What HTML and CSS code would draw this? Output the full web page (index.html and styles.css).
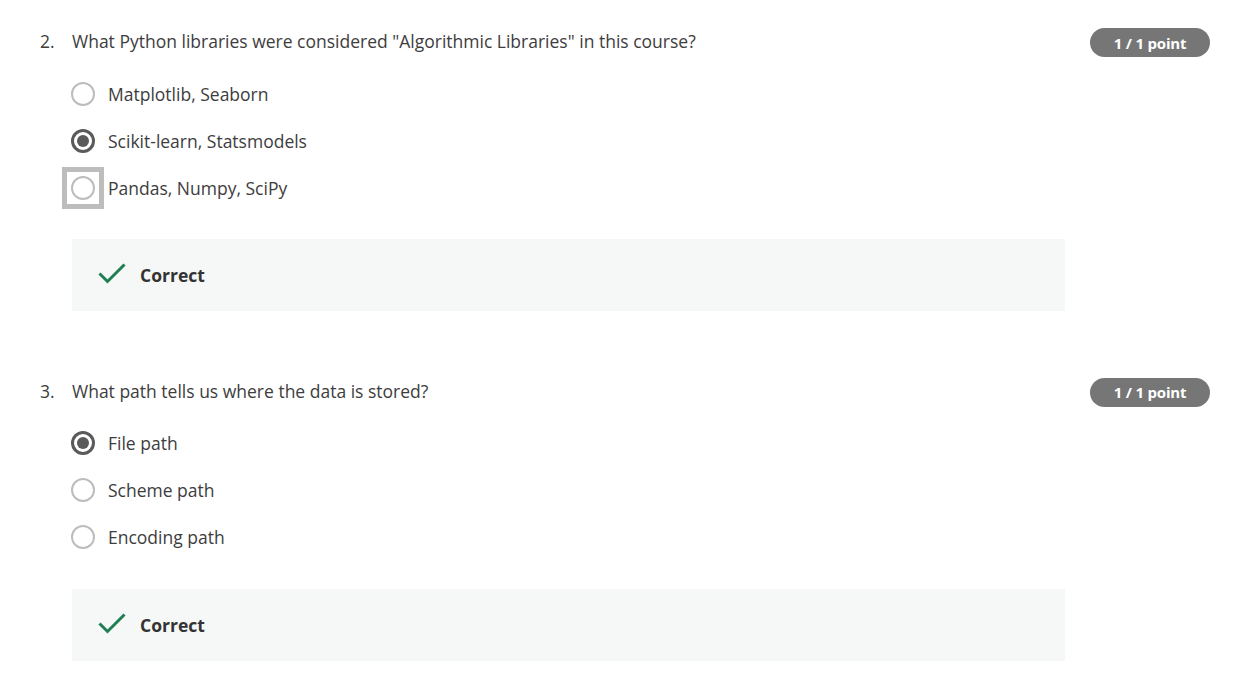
FILE: index.html
```html
<!DOCTYPE html>
<html lang="en">
<head>
<meta charset="utf-8">
<title>Quiz</title>
<link rel="stylesheet" href="styles.css">
</head>
<body>
<div class="page">
  <section class="question">
    <div class="q-head">
      <span class="q-num">2.</span>
      <span class="q-text">What Python libraries were considered "Algorithmic Libraries" in this course?</span>
      <span class="badge">1 / 1 point</span>
    </div>
    <div class="options">
      <div class="option"><span class="radio-wrap"><span class="radio"></span></span><span class="label">Matplotlib, Seaborn</span></div>
      <div class="option"><span class="radio-wrap"><span class="radio checked"></span></span><span class="label">Scikit-learn, Statsmodels</span></div>
      <div class="option"><span class="radio-wrap focused"><span class="radio"></span></span><span class="label">Pandas, Numpy, SciPy</span></div>
    </div>
    <div class="feedback">
      <svg class="check" width="28" height="22" viewBox="0 0 28 22"><path d="M1.5 10.5 L9.5 18.5 L26.5 1.5" fill="none" stroke="#1f7f52" stroke-width="3"/></svg>
      <span class="fb-text">Correct</span>
    </div>
  </section>
  <section class="question">
    <div class="q-head">
      <span class="q-num">3.</span>
      <span class="q-text">What path tells us where the data is stored?</span>
      <span class="badge">1 / 1 point</span>
    </div>
    <div class="options">
      <div class="option"><span class="radio-wrap"><span class="radio checked"></span></span><span class="label">File path</span></div>
      <div class="option"><span class="radio-wrap"><span class="radio"></span></span><span class="label">Scheme path</span></div>
      <div class="option"><span class="radio-wrap"><span class="radio"></span></span><span class="label">Encoding path</span></div>
    </div>
    <div class="feedback">
      <svg class="check" width="28" height="22" viewBox="0 0 28 22"><path d="M1.5 10.5 L9.5 18.5 L26.5 1.5" fill="none" stroke="#1f7f52" stroke-width="3"/></svg>
      <span class="fb-text">Correct</span>
    </div>
  </section>
</div>
</body>
</html>
```
FILE: styles.css
```css
* { box-sizing: border-box; }
body {
  margin: 0;
  background: #fff;
  font-family: "Open Sans", "Noto Sans", sans-serif;
  color: #3d3d3d;
}
.page {
  padding: 28px 30px 0 40px;
  display: flex;
  flex-direction: column;
  gap: 67px;
}
.q-head {
  display: flex;
  align-items: flex-start;
}
.q-num {
  width: 32px;
  font-size: 17.5px;
  line-height: 26px;
}
.q-text {
  font-size: 17.5px;
  line-height: 26px;
}
.badge {
  margin-left: auto;
  width: 120px;
  height: 29px;
  border-radius: 15px;
  background: #767676;
  color: #fff;
  font-weight: 700;
  font-size: 15px;
  display: flex;
  align-items: center;
  justify-content: center;
  letter-spacing: -0.2px;
}
.options {
  margin-top: 13px;
  padding-left: 31px;
  display: flex;
  flex-direction: column;
}
.option {
  height: 47px;
  display: flex;
  align-items: center;
  gap: 13px;
}
.radio-wrap {
  display: flex;
  flex: none;
}
.radio-wrap.focused {
  outline: 5px solid #bdbdbd;
  outline-offset: 4px;
}
.radio {
  width: 24px;
  height: 24px;
  border-radius: 50%;
  border: 2px solid #bdbdbd;
  display: flex;
  align-items: center;
  justify-content: center;
  flex: none;
}
.radio.checked {
  border: 3px solid #5a5a5a;
}
.radio.checked::after {
  content: "";
  width: 12px;
  height: 12px;
  border-radius: 50%;
  background: #5a5a5a;
}
.label {
  font-size: 17.5px;
  line-height: 26px;
}
.feedback {
  margin-top: 27.6px;
  margin-left: 32px;
  width: 993px;
  height: 72.4px;
  background: #f5f8f7;
  display: flex;
  align-items: center;
  padding-left: 26px;
  gap: 14px;
}
.check { display: block; margin-top: -2px; }
.fb-text {
  font-size: 17.5px;
  font-weight: 700;
  color: #333;
}
```
